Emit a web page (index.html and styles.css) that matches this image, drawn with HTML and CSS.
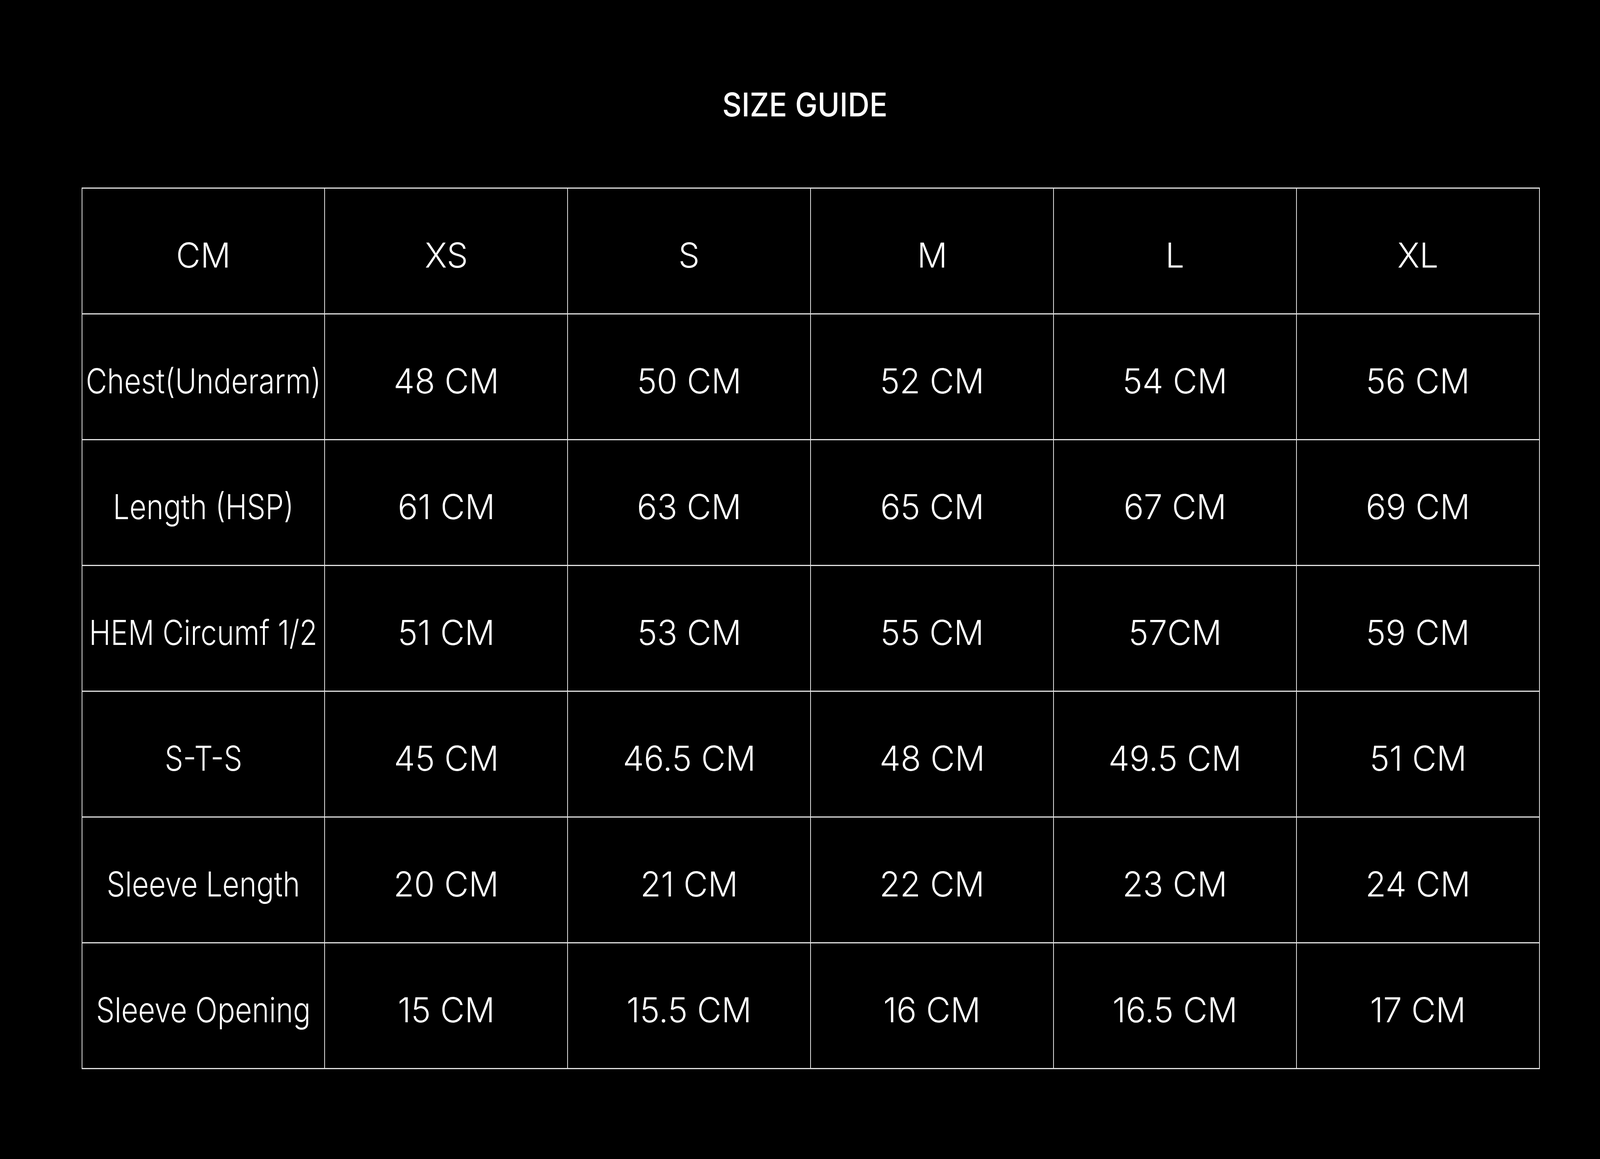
FILE: index.html
```html
<!DOCTYPE html>
<html lang="en">
<head>
<meta charset="utf-8">
<title>Size Guide</title>
<link rel="stylesheet" href="styles.css">
<script src="script.js"></script>
</head>
<body>
<main class="page">
  <h1 class="title"><span class="wide-title">SIZE GUIDE</span></h1>
  <div class="chart">
    <div class="cell"><span class="wide">CM</span></div>
    <div class="cell"><span class="wide">XS</span></div>
    <div class="cell"><span class="wide">S</span></div>
    <div class="cell"><span class="wide">M</span></div>
    <div class="cell"><span class="wide">L</span></div>
    <div class="cell"><span class="wide">XL</span></div>

    <div class="cell"><span class="label">Chest(Underarm)</span></div>
    <div class="cell"><span class="wide">48 CM</span></div>
    <div class="cell"><span class="wide">50 CM</span></div>
    <div class="cell"><span class="wide">52 CM</span></div>
    <div class="cell"><span class="wide">54 CM</span></div>
    <div class="cell"><span class="wide">56 CM</span></div>

    <div class="cell"><span class="label">Length (HSP)</span></div>
    <div class="cell"><span class="wide">61 CM</span></div>
    <div class="cell"><span class="wide">63 CM</span></div>
    <div class="cell"><span class="wide">65 CM</span></div>
    <div class="cell"><span class="wide">67 CM</span></div>
    <div class="cell"><span class="wide">69 CM</span></div>

    <div class="cell"><span class="label">HEM Circumf 1/2</span></div>
    <div class="cell"><span class="wide">51 CM</span></div>
    <div class="cell"><span class="wide">53 CM</span></div>
    <div class="cell"><span class="wide">55 CM</span></div>
    <div class="cell"><span class="wide">57CM</span></div>
    <div class="cell"><span class="wide">59 CM</span></div>

    <div class="cell"><span class="label">S-T-S</span></div>
    <div class="cell"><span class="wide">45 CM</span></div>
    <div class="cell"><span class="wide">46.5 CM</span></div>
    <div class="cell"><span class="wide">48 CM</span></div>
    <div class="cell"><span class="wide">49.5 CM</span></div>
    <div class="cell"><span class="wide">51 CM</span></div>

    <div class="cell"><span class="label">Sleeve Length</span></div>
    <div class="cell"><span class="wide">20 CM</span></div>
    <div class="cell"><span class="wide">21 CM</span></div>
    <div class="cell"><span class="wide">22 CM</span></div>
    <div class="cell"><span class="wide">23 CM</span></div>
    <div class="cell"><span class="wide">24 CM</span></div>

    <div class="cell"><span class="label">Sleeve Opening</span></div>
    <div class="cell"><span class="wide">15 CM</span></div>
    <div class="cell"><span class="wide">15.5 CM</span></div>
    <div class="cell"><span class="wide">16 CM</span></div>
    <div class="cell"><span class="wide">16.5 CM</span></div>
    <div class="cell"><span class="wide">17 CM</span></div>
  </div>
</main>
</body>
</html>
```
FILE: styles.css
```css
:root {
  /* horizontal scale of the viewport against the 6008px-wide design */
  --sx: 0.6818;
}

html, body {
  margin: 0;
  padding: 0;
  background: #000;
}

body {
  color: #fff;
  font-family: Inter, "Liberation Sans", Arial, sans-serif;
  overflow: hidden;
}

.page {
  width: 100%;
  padding-top: 226px;
}

.title {
  margin: 0;
  padding-left: 0.62%;
  text-align: center;
  font-size: 84px;
  line-height: 84px;
  font-weight: 500;
}

.wide-title {
  display: inline-block;
  transform: scaleX(calc(1.34 * var(--sx)));
  transform-origin: center;
  white-space: nowrap;
}

.chart {
  margin: 170px 0 0 5.093%;
  width: 91.145%;
  display: grid;
  grid-template-columns: repeat(6, 1fr);
  grid-auto-rows: 322px;
  border-top: 3px solid #e2e2e2;
  border-left: 2px solid #e2e2e2;
  box-sizing: border-box;
}

.cell {
  display: flex;
  align-items: center;
  justify-content: center;
  min-width: 0;
  border-right: 2px solid #e2e2e2;
  border-bottom: 3px solid #e2e2e2;
  padding-top: 20px;
  box-sizing: border-box;
  font-size: 88px;
  line-height: 88px;
  font-weight: 300;
}

.wide {
  display: inline-block;
  transform: scaleX(calc(1.43 * var(--sx)));
  transform-origin: center;
  white-space: nowrap;
}

.label {
  display: inline-block;
  transform: scaleX(calc(1.245 * var(--sx)));
  transform-origin: center;
  white-space: nowrap;
}
```
FILE: script.js
```js
document.documentElement.style.setProperty('--sx', String(window.innerWidth / 6008));
```
